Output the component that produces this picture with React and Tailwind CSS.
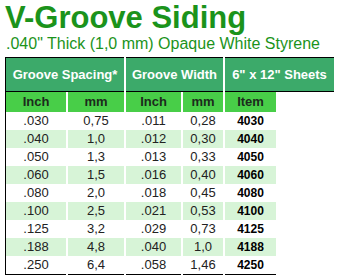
import React from "react";

const rows = [
  [".030", "0,75", ".011", "0,28", "4030"],
  [".040", "1,0", ".012", "0,30", "4040"],
  [".050", "1,3", ".013", "0,33", "4050"],
  [".060", "1,5", ".016", "0,40", "4060"],
  [".080", "2,0", ".018", "0,45", "4080"],
  [".100", "2,5", ".021", "0,53", "4100"],
  [".125", "3,2", ".029", "0,73", "4125"],
  [".188", "4,8", ".040", "1,0", "4188"],
  [".250", "6,4", ".058", "1,46", "4250"],
];

const widths = ["w-[61px]", "w-[56px]", "w-[55px]", "w-[40px]", "w-[51px]"];

const App = () => {
  return (
    <div className="w-[340px] h-[280px] bg-white overflow-hidden font-['Liberation_Sans',Arial,sans-serif]">
      <div className="pl-[5px] pt-[1px]">
        <h1 className="text-[31px] leading-[34px] font-bold text-[#1b931b]">
          V-Groove Siding
        </h1>
        <p className="text-[16px] leading-[18px] text-[#1b931b] pl-[1px]">
          .040" Thick (1,0 mm) Opaque White Styrene
        </p>
      </div>

      <div className="mt-[4px] ml-[5px]">
        {/* Header */}
        <div className="flex gap-[2px]">
          <div className="w-[119px] h-[35px] border-t border-b border-l border-black bg-[#3caa6a] text-white text-[13px] font-bold flex items-center justify-center">
            Groove Spacing*
          </div>
          <div className="w-[97px] h-[35px] border-t border-b border-black bg-[#3caa6a] text-white text-[13px] font-bold flex items-center justify-center">
            Groove Width
          </div>
          <div className="w-[109px] h-[35px] border-t border-b border-black bg-[#3caa6a] text-white text-[13px] font-bold flex items-center justify-center">
            6" x 12" Sheets
          </div>
        </div>

        {/* Sub-header */}
        <div className="flex gap-[2px]">
          {["Inch", "mm", "Inch", "mm", "Item"].map((t, i) => (
            <div
              key={i}
              className={`${widths[i]} ${i === 0 ? "border-l border-black" : ""} h-[20px] bg-[#48ce48] text-[#1c2a1c] text-[13px] font-bold flex items-center justify-center`}
            >
              {t}
            </div>
          ))}
        </div>

        {/* Data */}
        {rows.map((r, ri) => {
          const last = ri === rows.length - 1;
          const bg = ri % 2 === 1 ? "bg-[#d7f4d7]" : "bg-white";
          return (
            <div key={ri} className="flex gap-[2px]">
              {r.map((v, ci) => (
                <div
                  key={ci}
                  className={`${widths[ci]} ${ci === 0 ? "border-l border-black" : ""} ${last ? "border-b border-black h-[19px]" : "h-[18px]"} ${bg} flex items-center justify-center ${ci === 4 ? "text-[12px] font-bold text-black" : "text-[13px] text-[#222]"}`}
                >
                  {v}
                </div>
              ))}
            </div>
          );
        })}
      </div>
    </div>
  );
};

export default App;
